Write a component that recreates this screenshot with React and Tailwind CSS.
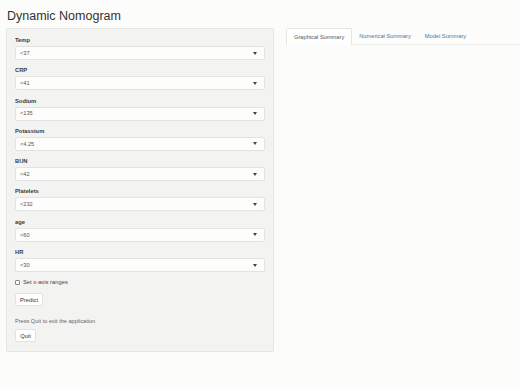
import React from 'react';

const fields = [
  { label: 'Temp', value: '<37' },
  { label: 'CRP', value: '<41' },
  { label: 'Sodium', value: '<135' },
  { label: 'Potassium', value: '<4.25' },
  { label: 'BUN', value: '<42' },
  { label: 'Platelets', value: '<232' },
  { label: 'age', value: '<60' },
  { label: 'HR', value: '<30' },
];

const Caret = () => (
  <svg width="4" height="3" viewBox="0 0 4 3" className="text-[#444]">
    <path d="M0 0 L4 0 L2 3 Z" fill="currentColor" />
  </svg>
);

export default function App() {
  return (
    <div
      className="w-[520px] h-[389px] bg-[#fcfcfa] text-[#333] overflow-hidden"
      style={{ fontFamily: '"Liberation Sans", Arial, sans-serif' }}
    >
      {/* Title */}
      <h1 className="pl-[7px] pt-[9px] h-[28px] text-[12.5px] leading-[15px] font-normal text-[#333]">
        Dynamic Nomogram
      </h1>

      <div className="flex">
        {/* Sidebar */}
        <div className="ml-[6px] w-[268px] h-[324px] bg-[#f3f3f2] border border-[#e6e6e4] rounded-[2px] px-[8px] pt-[7px]">
          {fields.map((f) => (
            <div key={f.label} className="mb-[6.3px]">
              <div className="text-[5.8px] leading-[8px] font-bold text-[#3a3a3a]">{f.label}</div>
              <div className="mt-[2px] h-[14px] w-[250px] bg-[#fdfdfc] border border-[#e3e3e1] rounded-[2px] flex items-center justify-between pl-[4px] pr-[7px]">
                <span className="text-[5.6px] text-[#555]">{f.value}</span>
                <Caret />
              </div>
            </div>
          ))}

          {/* Checkbox */}
          <div className="flex items-center gap-[3px] mt-[4px] h-[8px]">
            <span className="w-[5px] h-[5px] border border-[#888] rounded-[1px] bg-white" />
            <span className="text-[5.8px] text-[#444]">Set x-axis ranges</span>
          </div>

          <button className="mt-[7px] h-[13px] w-[28px] bg-white border border-[#e2e2e0] rounded-[2px] text-[5.8px] text-[#333] flex items-center justify-center">
            Predict
          </button>

          <div className="mt-[11px] text-[5.6px] leading-[8px] text-[#666]">
            Press Quit to exit the application
          </div>

          <button className="mt-[4px] h-[13px] w-[21px] bg-white border border-[#e2e2e0] rounded-[2px] text-[5.8px] text-[#333] flex items-center justify-center">
            Quit
          </button>
        </div>

        {/* Main tabs */}
        <div className="ml-[12px] flex-1">
          <div className="flex h-[17px] border-b border-[#ececea]">
            <div className="h-[17px] px-[7px] bg-white border border-b-0 border-[#e6e6e4] rounded-t-[2px] flex items-center text-[5.7px] text-[#555]">
              Graphical Summary
            </div>
            <div className="h-[17px] px-[7px] flex items-center text-[5.7px] text-[#3f79a8]">
              Numerical Summary
            </div>
            <div className="h-[17px] px-[7px] flex items-center text-[5.7px] text-[#3f79a8]">
              Model Summary
            </div>
          </div>
        </div>
      </div>
    </div>
  );
}
